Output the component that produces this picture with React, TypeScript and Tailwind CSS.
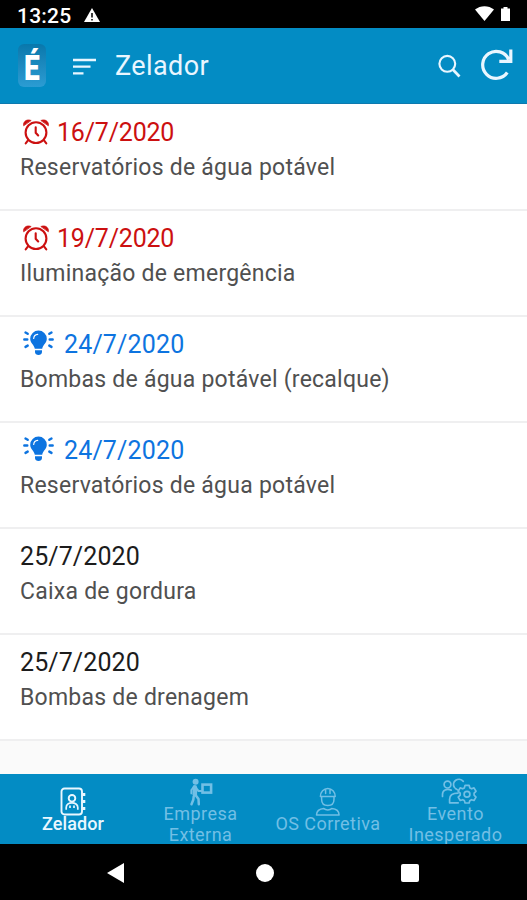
import { useState } from 'react'
import type { ReactNode } from 'react'
import clsx from 'clsx'

type Status = 'late' | 'soon' | 'planned'

interface Task {
  id: number
  date: string
  name: string
  status: Status
}

const TASKS: Task[] = [
  { id: 1, date: '16/7/2020', name: 'Reservatórios de água potável', status: 'late' },
  { id: 2, date: '19/7/2020', name: 'Iluminação de emergência', status: 'late' },
  { id: 3, date: '24/7/2020', name: 'Bombas de água potável (recalque)', status: 'soon' },
  { id: 4, date: '24/7/2020', name: 'Reservatórios de água potável', status: 'soon' },
  { id: 5, date: '25/7/2020', name: 'Caixa de gordura', status: 'planned' },
  { id: 6, date: '25/7/2020', name: 'Bombas de drenagem', status: 'planned' },
]

const STATUS_STYLE: Record<Status, string> = {
  late: 'text-[#cc1010] tracking-[-0.2px]',
  soon: 'text-[#0d74e0] tracking-[0.15px]',
  planned: 'text-[#1c1c1c] tracking-[0.1px]',
}

function AlarmIcon() {
  return (
    <svg width="26" height="26" viewBox="0 0 26 26" fill="none" stroke="currentColor" strokeWidth="2.1" strokeLinecap="round" className="ml-[3px] mr-[8px] shrink-0">
      <circle cx="13" cy="13.6" r="10.4" />
      <path d="M12.7 8.2v5.6l2.5 2.7M5 21.4l-2.3 3M21 21.4l2.3 3" />
      <path d="M.6 6.4C0 2.4 3.8-.2 7.8 1.4zM25.4 6.4c.6-4-3.2-6.6-7.2-5z" fill="currentColor" strokeWidth="0.8" />
    </svg>
  )
}

function BulbIcon() {
  return (
    <svg width="31" height="26" viewBox="0 0 31 26" fill="none" stroke="currentColor" strokeWidth="2.4" strokeLinecap="round" className="-mt-[2px] ml-[3px] mr-[10px] shrink-0">
      <path d="M15.5.6a8.3 8.3 0 0 0-8.3 8.2c0 4.4 3.7 5.6 4.6 10h7.4c.9-4.4 4.6-5.6 4.6-10A8.3 8.3 0 0 0 15.5.6z" fill="currentColor" stroke="none" />
      <path d="M12 20.3h7v1.8c0 1.7-1.6 3-3.5 3S12 23.8 12 22.1z" fill="currentColor" stroke="none" />
      <path d="M10.7 8.5c.2-2.3 1.8-3.9 4-4.1" stroke="#fff" strokeWidth="1.2" />
      <path d="M2.5 2.5l2.2 1.3M1.3 9.5h3M2.5 16.9l2.2-1.3M28.5 2.5l-2.2 1.3M29.7 9.5h-3M28.5 16.9l-2.2-1.3" />
    </svg>
  )
}

function ContactIcon() {
  return (
    <svg width="28" height="30" viewBox="0 0 28 30" fill="none" stroke="currentColor" strokeWidth="1.9">
      <rect x="2.5" y="1.5" width="20.5" height="26" rx="3" />
      <circle cx="13" cy="11.3" r="3.3" />
      <path d="M7.2 22.8v-2.2c0-6.4 11.6-6.4 11.6 0v2.2M11 18.5v2.5M15 18.5v2.5" strokeWidth="1.7" />
      <path d="M23.3 7.5h3M23.3 14.5h3M23.3 21.5h3" strokeWidth="3" />
    </svg>
  )
}

function CarrierIcon() {
  return (
    <svg width="24" height="28" viewBox="0 0 24 28" fill="none" stroke="currentColor" strokeLinejoin="round" strokeLinecap="round">
      <circle cx="6.6" cy="3.7" r="3" fill="currentColor" stroke="none" />
      <rect x="13.5" y="6.6" width="8.6" height="8" strokeWidth="2.6" strokeLinejoin="miter" />
      <path d="M4.7 9l-2.4 3v3.4" strokeWidth="1.8" />
      <path d="M5.8 9.3v7" strokeWidth="4.6" />
      <path d="M6.5 9.3l3 3.7h3.3" strokeWidth="2" />
      <path d="M4.7 18.5l-.4 3.2-1.8 4.6M6.5 17l3 4 .3 5.3" strokeWidth="2.5" />
    </svg>
  )
}

function WorkerIcon() {
  return (
    <svg width="26" height="30" viewBox="0 0 26 30" fill="none" stroke="currentColor" strokeWidth="1.5" strokeLinecap="round" strokeLinejoin="round">
      <path d="M5.4 9.5a7.4 8 0 0 1 14.8 0zM10.6 2.2v4.2M15 2.2v4.2" />
      <path d="M6.6 9.7v2.5c0 4.1 2.6 6.3 6.2 6.3s6.2-2.2 6.2-6.3V9.7" />
      <path d="M1.5 28c.1-4.3 2.6-6 7.4-6.4 1.9 1.7 5.9 1.7 7.8 0 4.8.4 7.3 2.1 7.4 6.4z" />
    </svg>
  )
}

function TeamGearIcon() {
  return (
    <svg width="36" height="27" viewBox="0 0 36 27" fill="none" stroke="currentColor" strokeWidth="1.7" strokeLinecap="round" strokeLinejoin="round" className="ml-[6px]">
      <circle cx="6.5" cy="6.6" r="3.4" />
      <path d="M1.5 18.5v-2.2c0-4.2 4.2-5.8 8.7-4.2" />
      <path d="M13.5 9.4C9.6 4 17.7-2.1 22.3 3.4" />
      <path d="M17.2 24.8H8.6v-3.5c0-4.2 2.9-6.2 8.4-6.2M14.4 10.5l2.2 1.4" />
      <path d="M24.1 7.3h4l.8 2.7 1.8.8 2.3-.9 2 3.4-1.9 1.8v2.1l1.9 1.9-2 3.4-2.5-.8-1.7 1-.7 2.3h-4l-.8-2.5-1.6-.8-2.5.8-2-3.4 2-1.9v-2.1l-2-1.8 2-3.4 2.5.9 1.6-.9z" />
      <circle cx="26" cy="16.2" r="2.9" />
    </svg>
  )
}

interface Tab {
  id: string
  lines: string[]
  icon: ReactNode
}

const TABS: Tab[] = [
  { id: 'zelador', lines: ['Zelador'], icon: <ContactIcon /> },
  { id: 'empresa', lines: ['Empresa', 'Externa'], icon: <CarrierIcon /> },
  { id: 'os', lines: ['OS Corretiva'], icon: <WorkerIcon /> },
  { id: 'evento', lines: ['Evento', 'Inesperado'], icon: <TeamGearIcon /> },
]

export default function App() {
  const [tab, setTab] = useState('zelador')

  return (
    <div className="flex h-[900px] w-[527px] flex-col overflow-hidden bg-[#fafafa] font-['Roboto',sans-serif]">
      {/* Status bar */}
      <div className="flex h-[28px] shrink-0 items-center bg-black px-[17px] pt-[4px] text-white">
        <span className="text-[21px] font-medium leading-none tracking-[0.2px]">13:25</span>
        <svg width="16" height="14" viewBox="0 0 16 14" className="-mt-[3px] ml-[13px]">
          <path d="M8 0l8 14H0z" fill="#fff" />
          <path d="M8 5v4.5M8 11v1.5" stroke="#000" strokeWidth="1.5" />
        </svg>
        <svg width="19" height="15" viewBox="0 0 19 15" className="-mt-[6px] ml-auto">
          <path d="M0 3.5C5.5-1 13.5-1 19 3.5L9.5 15z" fill="#fff" />
        </svg>
        <svg width="9" height="14" viewBox="0 0 9 14" className="-mt-[4px] ml-[7px]">
          <path d="M2.5 0h4v1.5H9V14H0V1.5h2.5z" fill="#fff" />
        </svg>
      </div>

      {/* App bar */}
      <header className="flex h-[76px] shrink-0 items-center border-b border-[#0d79ae] bg-[#038cc4] pl-[18px] pr-[14px] text-[#e9f6ff]">
        <div className="flex h-[43px] w-[28px] items-center justify-center rounded-[6px] bg-linear-to-b from-[#0878ac] to-[#2b9cd3]">
          <span className="mt-[5px] scale-x-80 text-[35px] font-black leading-none text-white">É</span>
        </div>
        <svg width="23" height="18" viewBox="0 0 23 18" stroke="currentColor" strokeWidth="2.3" className="ml-[27px] mt-[2px]">
          <path d="M0 2h23M0 8.7h17.5M0 15.3h10.5" />
        </svg>
        <h1 className="ml-[19px] mt-[2px] text-[27px] leading-none tracking-[0.4px]">Zelador</h1>
        <button className="ml-auto" aria-label="Buscar">
          <svg width="23" height="24" viewBox="0 0 23 24" fill="none" stroke="currentColor" strokeWidth="2.1">
            <circle cx="9.3" cy="9.8" r="7.9" />
            <path d="M14.8 15.5l6.7 7" strokeWidth="2.7" />
          </svg>
        </button>
        <button className="mb-[3px] ml-[20px]" aria-label="Atualizar">
          <svg width="32" height="32" viewBox="0 0 32 32" fill="none" stroke="currentColor" strokeWidth="3.2">
            <path d="M26.3 24.5A13.5 13.5 0 1 1 27.6 11.5M29.8 1.5v11.8H18.3" />
          </svg>
        </button>
      </header>

      {/* Task list */}
      <ul className="min-h-0 flex-1">
        {TASKS.map((task, i) => (
          <li
            key={task.id}
            className={clsx(
              'flex flex-col border-b-2 border-[#efeff0] bg-white pl-[20px]',
              i === 0 ? 'h-[107px] pt-[10px]' : 'h-[106px] pt-[9px]',
            )}
          >
            <div className={clsx('flex h-[36px] items-center text-[25px] leading-none', STATUS_STYLE[task.status])}>
              {task.status === 'late' && <AlarmIcon />}
              {task.status === 'soon' && <BulbIcon />}
              <span>{task.date}</span>
            </div>
            <p className="flex h-[34px] items-center whitespace-pre text-[23px] leading-none tracking-[0.24px] text-[#505050]">{task.name}</p>
          </li>
        ))}
      </ul>

      {/* Bottom tabs */}
      <nav className="grid h-[70px] shrink-0 grid-cols-[146px_109px_146px_109px] bg-[#038cc4]">
        {TABS.map((t) => (
          <button
            key={t.id}
            onClick={() => setTab(t.id)}
            className={clsx(
              'flex flex-col items-center justify-start text-[18px] leading-[21px]',
              t.lines.length > 1 ? 'pt-[4px]' : 'pt-[13px]',
              t.id === tab ? 'font-medium tracking-[0.1px] text-[#e9f7ff]' : 'tracking-[0.45px] text-[#72bfe5]',
            )}
          >
            <span className={clsx('flex', t.lines.length > 1 ? 'h-[25px]' : 'h-[26px]')}>{t.icon}</span>
            {t.lines.map((line) => (
              <span key={line} className="whitespace-nowrap">{line}</span>
            ))}
          </button>
        ))}
      </nav>

      {/* Android navigation */}
      <div className="flex h-[56px] shrink-0 items-center bg-black pl-[107px] pt-[1px] text-white">
        <svg width="17" height="20" viewBox="0 0 17 20" fill="currentColor">
          <path d="M17 0v20L0 10z" />
        </svg>
        <span className="ml-[132px] size-[18px] rounded-full bg-white" />
        <span className="ml-[127px] size-[18px] rounded-[2px] bg-white" />
      </div>
    </div>
  )
}
